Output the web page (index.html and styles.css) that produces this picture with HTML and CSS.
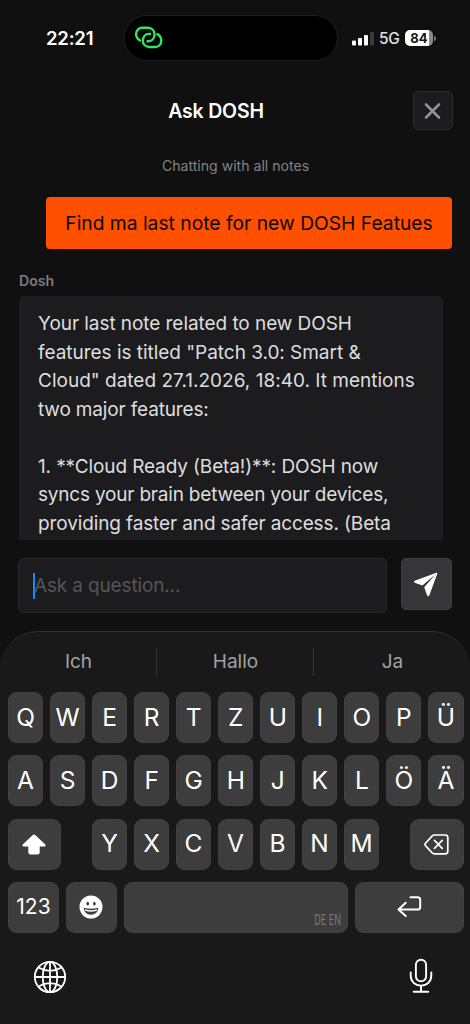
FILE: index.html
```
<!DOCTYPE html>
<html lang="en">
<head>
<meta charset="utf-8">
<title>Ask DOSH</title>
<link rel="stylesheet" href="styles.css">
</head>
<body>
<div class="phone">
  <div class="status">
    <span class="time">22:21</span>
    <div class="island">
      <svg width="30" height="24" viewBox="0 0 30 24" fill="none" stroke="#30e860" stroke-width="2.4" stroke-linecap="round">
        <path d="M6 14.400C3.600 13.300 2.100 11.200 2.100 8.100C2.100 4.400 4.700 1.800 8.200 1.800H13.500C17.500 1.800 20.500 4.400 20.500 8.200C20.500 12.300 18 15.200 14.300 15.200H13.500"/>
        <path d="M23.300 8.200C25.700 9.300 27.200 11.500 27.200 14.700C27.200 18.400 24.700 21 21.200 21H15.500C11.500 21 8.900 18.400 8.900 14.800C8.900 10.600 11.400 7.900 15.100 7.900H16"/>
      </svg>
    </div>
    <div class="signals">
      <svg width="22" height="15" viewBox="0 0 22 15"><rect x="0" y="9.500" width="4" height="5" rx="1" fill="#fff"/><rect x="6" y="7" width="4" height="7.500" rx="1" fill="#fff"/><rect x="12" y="4" width="4" height="10.500" rx="1" fill="#fff"/><rect x="18" y="1" width="4" height="13.500" rx="1" fill="#3b3b3b"/></svg>
      <span class="net">5G</span>
      <div class="battery"><span>84</span></div>
      <i class="tip"></i>
    </div>
  </div>

  <header class="header">
    <h1>Ask DOSH</h1>
    <button class="close" aria-label="Close"><svg width="18" height="18" viewBox="0 0 18 18" stroke="#929293" stroke-width="2.600" stroke-linecap="round"><path d="M2 2.500l13 13M15 2.500l-13 13"/></svg></button>
  </header>

  <main class="chat">
    <p class="scope">Chatting with all notes</p>
    <div class="question"><span>Find ma last note for new DOSH Featues</span></div>
    <div class="sender">Dosh</div>
    <div class="answer">
      <div class="l1">Your last note related to new DOSH</div>
      <div class="l2">features is titled "Patch 3.0: Smart &amp;</div>
      <div class="l3">Cloud" dated 27.1.2026, 18:40. It mentions</div>
      <div class="l4">two major features:</div>
      <div>&nbsp;</div>
      <div class="l5">1. **Cloud Ready (Beta!)**: DOSH now</div>
      <div class="l6">syncs your brain between your devices,</div>
      <div class="l5">providing faster and safer access. (Beta</div>
    </div>
  </main>

  <div class="composer">
    <div class="field"><i class="caret"></i><span>Ask a question...</span></div>
    <button class="send" aria-label="Send"><svg width="27" height="25" viewBox="0 0 28 26" fill="#fff"><path d="M24.300 .8Q25.500 .5 25.200 1.800L17 24.300Q16 26 14.700 24.500L11.600 15.800L23.200 2.500L9.700 14L1.700 11.200Q.2 10.200 1.700 9.200Z"/></svg></button>
  </div>

  <section class="keyboard">
    <div class="suggest"><span>Ich</span><span>Hallo</span><span>Ja</span></div>
    <div class="keys">
      <div class="row eleven"><b>Q</b><b>W</b><b>E</b><b>R</b><b>T</b><b>Z</b><b>U</b><b>I</b><b>O</b><b>P</b><b>Ü</b></div>
      <div class="row eleven"><b>A</b><b>S</b><b>D</b><b>F</b><b>G</b><b>H</b><b>J</b><b>K</b><b>L</b><b>Ö</b><b>Ä</b></div>
      <div class="row third">
        <b class="shift"><svg width="24" height="21" viewBox="0 0 24 21" fill="#fff"><path d="M10.800 .9Q12 0 13.200 .9L23.300 10.400Q24.200 12.200 22.400 12.400H17.700V18.500Q17.700 20.600 15.600 20.600H8.400Q6.300 20.600 6.300 18.500V12.400H1.600Q-.2 12.200 .7 10.400Z"/></svg></b>
        <div class="letters"><b>Y</b><b>X</b><b>C</b><b>V</b><b>B</b><b>N</b><b>M</b></div>
        <b class="delete"><svg width="25" height="21" viewBox="0 0 25 21" fill="none" stroke="#fff" stroke-width="1.700" stroke-linecap="round" stroke-linejoin="round"><path d="M10.500 1H21.300Q23.800 1 23.800 3.500V17.300Q23.800 19.800 21.300 19.800H10.500Q9 19.800 8 18.700L1.500 11.600Q.5 10.400 1.500 9.200L8 2.100Q9 1 10.500 1ZM10.500 6.400l7.700 8M18.200 6.400l-7.700 8"/></svg></b>
      </div>
      <div class="row fourth">
        <b class="num">123</b>
        <b class="smile"><svg width="24" height="24" viewBox="0 0 24 24"><circle cx="12" cy="12" r="11.500" fill="#fff"/><ellipse cx="8.700" cy="8.700" rx="1.300" ry="1.900" fill="#3d3d3d"/><ellipse cx="15.400" cy="8.700" rx="1.300" ry="1.900" fill="#3d3d3d"/><path d="M4.600 12.800Q12 14.800 19.400 12.800Q18.500 19.700 12 19.700Q5.500 19.700 4.600 12.800Z" fill="#3d3d3d"/><path d="M5.800 14.300Q12 16.200 18.200 14.300L17.800 15.800Q12 17.500 6.200 15.800Z" fill="#fff"/></svg></b>
        <b class="space"><span>DE EN</span></b>
        <b><svg width="25" height="21" viewBox="0 0 25 21" fill="none" stroke="#fff" stroke-width="2" stroke-linecap="round" stroke-linejoin="round"><path d="M13.500 1.200H20.600Q23.200 1.200 23.200 3.800V10.900Q23.200 13.500 20.600 13.500H1.500M8.700 6.800L1.500 13.500L8.700 20"/></svg></b>
      </div>
    </div>
    <div class="bottom">
      <svg class="globe" width="34" height="34" viewBox="0 0 34 34" fill="none" stroke="#fff" stroke-width="1.800"><circle cx="17" cy="17" r="15.200"/><ellipse cx="17" cy="17" rx="7.300" ry="15.200"/><path d="M17 1.800V32.200M1.800 17H32.200M5.500 7.500Q17 14.200 28.500 7.500M5.500 26.500Q17 19.800 28.500 26.500"/></svg>
      <svg width="24" height="36" viewBox="0 0 24 36" fill="none" stroke="#fff" stroke-width="1.900" stroke-linecap="round"><rect x="6.900" y="1.700" width="10.200" height="21.600" rx="5.100"/><path d="M1.700 14.500V17.600C1.700 23.600 6.100 27.600 12 27.600S22.300 23.600 22.300 17.600V14.500M12 27.600V33.800M4.700 33.800H19.300"/></svg>
    </div>
  </section>
</div>
</body>
</html>
```
FILE: styles.css
```
* { box-sizing: border-box; }
body { margin: 0; background: #101010; color: #fff; font-family: Inter, sans-serif; }
button { padding: 0; font: inherit; }
svg { display: block; }
.phone { width: 470px; height: 1024px; overflow: hidden; display: flex; flex-direction: column; white-space: nowrap; }

.status { height: 76px; flex: none; display: flex; align-items: center; padding-left: 46px; }
.time { width: 78px; font-size: 18.500px; font-weight: 600; letter-spacing: -.2px; }
.island { width: 214px; height: 46px; border: 1.500px solid #1d1d1d; border-radius: 24px; background: #000; display: flex; align-items: center; padding-left: 9px; }
.signals { display: flex; align-items: center; margin-left: 14px; }
.net { font-size: 15.500px; font-weight: 500; color: #e0e0e0; margin-left: 5px; width: 26px; letter-spacing: -.4px; }
.battery { width: 28px; height: 16px; border-radius: 5px; background: linear-gradient(90deg, #fff 84%, #8c8c8c 84%); color: #161616; font-size: 13px; line-height: 16px; font-weight: 700; text-align: center; }
.tip { width: 2px; height: 5px; margin-left: 1px; background: #777; border-radius: 0 2px 2px 0; }

.header { height: 69px; flex: none; display: grid; grid-template-columns: 1fr 40px; align-items: center; padding: 0 17px 0 19px; }
.header h1 { margin: 0; text-align: center; font-size: 19.500px; font-weight: 600; letter-spacing: -.2px; }
.close { width: 40px; height: 39px; border: 1px solid #2d2d2f; border-radius: 5px; background: #1c1c1e; display: grid; place-items: center; }

.chat { height: 395px; flex: none; overflow: hidden; padding: 10px 18px 0 19px; }
.scope { margin: 0 0 21px; height: 21px; line-height: 21px; text-align: center; font-size: 14.100px; color: #828284; }
.question { margin-left: 27px; height: 52px; border-radius: 4px; background: #ff5000; color: #0c0704; display: flex; align-items: center; justify-content: center; font-size: 19.250px; }
.sender { margin-top: 21px; height: 22px; line-height: 22px; font-size: 14.100px; font-weight: 600; color: #7c7c7e; }
.answer { margin-top: 4px; width: 424px; height: 300px; padding: 14px 19px; border-radius: 5px; background: #1c1c1e; color: #dededf; font-size: 19px; line-height: 28.500px; }
.l1 { letter-spacing: -.06px; }
.l2 { letter-spacing: -.03px; }
.l3 { letter-spacing: .01px; }
.l4 { letter-spacing: -.15px; }
.l5 { letter-spacing: -.12px; }
.l6 { letter-spacing: -.2px; }

.composer { height: 91px; flex: none; display: flex; gap: 14px; padding: 18px 18px 0; }
.field { width: 369px; height: 55px; border: 1px solid #28282a; border-radius: 5px; background: #1c1c1e; display: flex; align-items: center; padding-left: 14px; color: #555557; font-size: 19px; letter-spacing: -.15px; }
.caret { width: 2px; height: 26px; margin-right: -1px; background: #148aff; }
.send { width: 51px; height: 52px; border: 1px solid #3e3e40; border-radius: 5px; background: #363638; display: grid; place-items: center; }

.keyboard { height: 393px; flex: none; background: #191919; border-top: 1.500px solid #303030; border-radius: 38px 38px 0 0; }
.suggest { height: 60px; display: grid; grid-template-columns: 156px 157px 1fr; align-items: center; font-size: 19px; color: #a2a2a2; text-align: center; }
.suggest span { height: 28px; line-height: 28px; padding-left: 1px; }
.suggest span + span { border-left: 1px solid #353535; }
.keys { display: grid; gap: 12.300px; padding: 0 6.500px 0 8px; }
.row { display: grid; gap: 7px; height: 51px; }
.eleven { grid-template-columns: repeat(11, 1fr); }
.third { grid-template-columns: 53px 1fr 53.500px; gap: 31px; }
.letters { display: grid; grid-template-columns: repeat(7, 1fr); gap: 7px; }
.fourth { grid-template-columns: 51px 51px 1fr 108.500px; }
.row b { display: flex; align-items: center; justify-content: center; background: #3d3d3d; border-radius: 9px; font-size: 24.500px; font-weight: 400; box-shadow: inset 0 0 0 1px #414141; padding-bottom: 2px; }
.row .shift, .row .smile { padding-right: 1px; }
.row .shift, .row .delete { padding-bottom: 0; padding-top: 1px; }
.row .num { font-size: 21px; }
.row .smile { padding-bottom: 1px; }
.row .space { align-items: flex-end; justify-content: flex-end; padding: 0 7px 4px; }
.space span { font-size: 14.500px; line-height: 18px; color: #777; transform: scaleX(.62); transform-origin: right; }
.bottom { display: flex; justify-content: space-between; align-items: center; padding: 25px 37px 0 33px; }
.globe { margin-top: 2px; }
```
